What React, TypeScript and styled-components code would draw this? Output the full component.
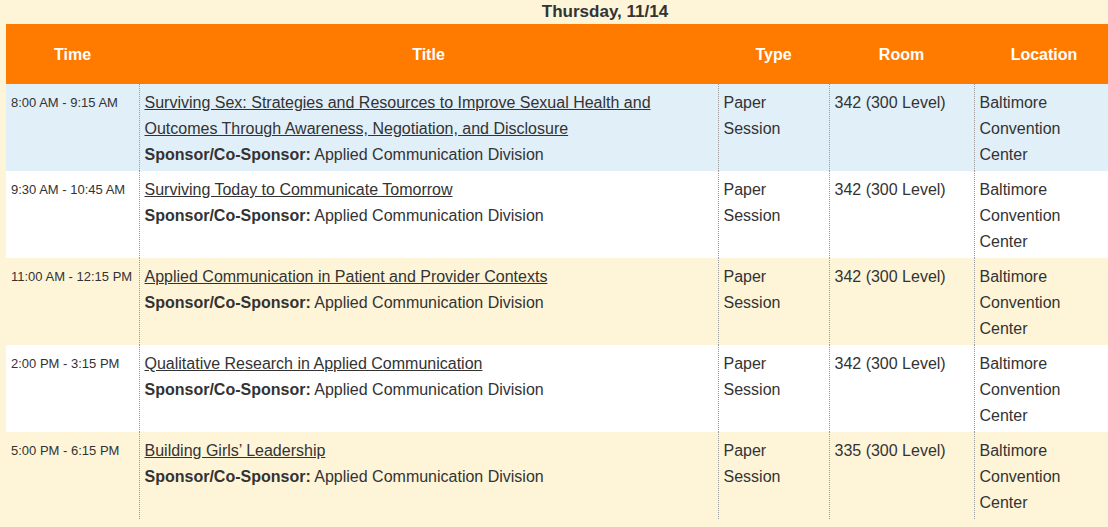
import React from 'react';
import styled, {createGlobalStyle} from 'styled-components';

const GlobalStyle = createGlobalStyle`
  html, body {
    margin: 0;
    padding: 0;
    background: #fef5d8;
    overflow: hidden;
  }
  body {
    font-family: "Liberation Sans", Arial, sans-serif;
    color: #333333;
  }
`;

const Page = styled.div`
  width: 1108px;
  height: 527px;
  overflow: hidden;
`;

const Caption = styled.div`
  height: 24px;
  line-height: 23px;
  padding-left: 102px;
  text-align: center;
  font-size: 17px;
  font-weight: bold;
  color: #333333;
`;

const Table = styled.table`
  margin-left: 6px;
  width: 1108px;
  border-collapse: collapse;
  table-layout: fixed;
`;

const HeadCell = styled.th<{ w: number }>`
  width: ${p => p.w}px;
  height: 58px;
  padding: 2px 0 0 0;
  background: #ff7b00;
  color: #ffffff;
  font-size: 16px;
  font-weight: bold;
  text-align: center;
  vertical-align: middle;
`;

const Row = styled.tr<{ tone: 'blue' | 'white' | 'cream' }>`
  height: 87px;
  background: ${p => p.tone === 'blue' ? '#e1eff8' : p.tone === 'white' ? '#ffffff' : '#fef5d8'};
`;

const Cell = styled.td<{ small?: boolean }>`
  padding: 6px 6px 3px 5px;
  vertical-align: top;
  font-size: ${p => p.small ? '13px' : '16px'};
  line-height: 26px;
  color: #333333;
  border-left: 1px dotted #9a9a9a;

  &:first-child {
    border-left: none;
    padding-left: 5px;
  }
`;

const TitleLink = styled.a`
  color: #333333;
  text-decoration: underline;
  display: block;
`;

const Sponsor = styled.div`
  b {
    font-weight: bold;
  }
`;

interface Session {
    time: string,
    title: string,
    room: string,
    tone: 'blue' | 'white' | 'cream',
}

const sessions: Session[] = [
    {
        time: '8:00 AM - 9:15 AM',
        title: 'Surviving Sex: Strategies and Resources to Improve Sexual Health and Outcomes Through Awareness, Negotiation, and Disclosure',
        room: '342 (300 Level)',
        tone: 'blue',
    },
    {time: '9:30 AM - 10:45 AM', title: 'Surviving Today to Communicate Tomorrow', room: '342 (300 Level)', tone: 'white'},
    {time: '11:00 AM - 12:15 PM', title: 'Applied Communication in Patient and Provider Contexts', room: '342 (300 Level)', tone: 'cream'},
    {time: '2:00 PM - 3:15 PM', title: 'Qualitative Research in Applied Communication', room: '342 (300 Level)', tone: 'white'},
    {time: '5:00 PM - 6:15 PM', title: 'Building Girls\u2019 Leadership', room: '335 (300 Level)', tone: 'cream'},
];

export default function App() {
    return (
        <Page>
            <GlobalStyle/>
            <Caption>Thursday, 11/14</Caption>
            <Table>
                <thead>
                <tr>
                    <HeadCell w={133}>Time</HeadCell>
                    <HeadCell w={579}>Title</HeadCell>
                    <HeadCell w={111}>Type</HeadCell>
                    <HeadCell w={145}>Room</HeadCell>
                    <HeadCell w={140}>Location</HeadCell>
                </tr>
                </thead>
                <tbody>
                {sessions.map(s => (
                    <Row key={s.time} tone={s.tone}>
                        <Cell small>{s.time}</Cell>
                        <Cell>
                            <TitleLink href="#">{s.title}</TitleLink>
                            <Sponsor><b>Sponsor/Co-Sponsor:</b> Applied Communication Division</Sponsor>
                        </Cell>
                        <Cell>Paper<br/>Session</Cell>
                        <Cell>{s.room}</Cell>
                        <Cell>Baltimore<br/>Convention<br/>Center</Cell>
                    </Row>
                ))}
                </tbody>
            </Table>
        </Page>
    );
}
